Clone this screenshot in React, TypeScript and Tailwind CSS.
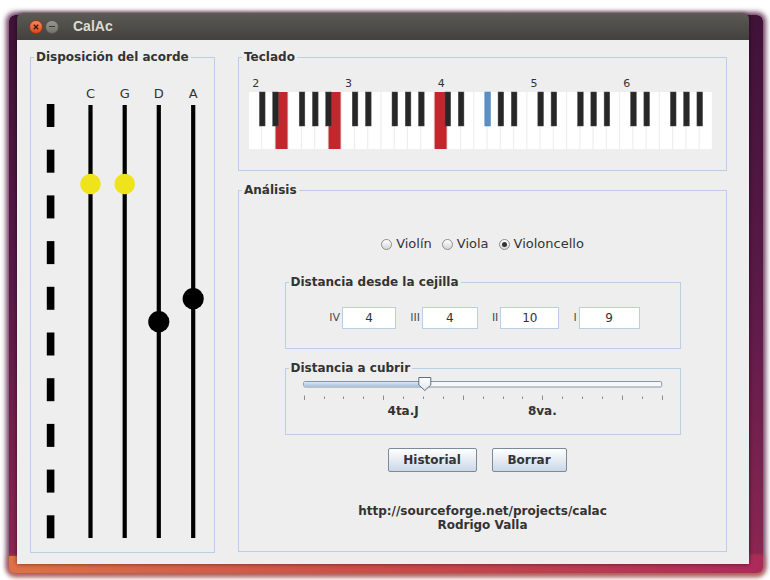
const KEY_W = 464 / 35;
const BLACK_STEPS = [1, 2, 4, 5, 6];
const RED_WHITES = [2, 6, 14];
const BLUE_BLACKS = [18];

const STRING_X = [59.5, 93.7, 127.8, 162.2];
const STRING_NAMES = ["C", "G", "D", "A"];

const FRETS = [
  { label: "IV", value: "4", width: "w-[54px]" },
  { label: "III", value: "4", width: "w-[56px]" },
  { label: "II", value: "10", width: "w-[59px]" },
  { label: "I", value: "9", width: "w-[61px]" },
];

function Keyboard() {
  const blacks: number[] = [];
  for (let o = 0; o < 5; o++) for (const s of BLACK_STEPS) blacks.push(o * 7 + s);
  return (
    <svg width="486" height="90" className="block">
      {[2, 3, 4, 5, 6].map((n, o) => (
        <text key={n} x={10 + o * 7 * KEY_W + KEY_W / 2} y="22.7" textAnchor="middle" fontSize="11" fill="#333">
          {n}
        </text>
      ))}
      {Array.from({ length: 35 }, (_, i) => (
        <rect
          key={i}
          x={10 + i * KEY_W}
          y="28"
          width={KEY_W - 1.2}
          height="57"
          fill={RED_WHITES.includes(i) ? "#c1272c" : "#ffffff"}
        />
      ))}
      {blacks.map((b) => (
        <rect
          key={b}
          x={10 + b * KEY_W - 2.8}
          y="28"
          width="5.6"
          height="34"
          fill={BLUE_BLACKS.includes(b) ? "#5b8fc4" : "#272727"}
          stroke={BLUE_BLACKS.includes(b) ? "#4d7db0" : "#4a4a4a"}
          strokeWidth="0.5"
        />
      ))}
    </svg>
  );
}

function Fingerboard() {
  return (
    <svg width="182" height="480" className="block">
      {Array.from({ length: 10 }, (_, i) => (
        <rect key={i} x="15.8" y={40 + i * 45.7} width="7.6" height="23" fill="#000" />
      ))}
      {STRING_X.map((x, i) => (
        <g key={i}>
          <text x={x} y="34.3" textAnchor="middle" fontSize="13" fill="#333">
            {STRING_NAMES[i]}
          </text>
          <rect x={x - 2.1} y="41" width="4.2" height="433" fill="#000" />
        </g>
      ))}
      <circle cx={STRING_X[0]} cy="120" r="10.3" fill="#efe31c" />
      <circle cx={STRING_X[1]} cy="120" r="10.3" fill="#efe31c" />
      <circle cx={STRING_X[2]} cy="257.7" r="10.6" fill="#000" />
      <circle cx={STRING_X[3]} cy="234.7" r="10.6" fill="#000" />
    </svg>
  );
}

function Slider() {
  const start = 17.7;
  const step = 358 / 18;
  const thumb = 138.8;
  return (
    <svg width="394" height="50" className="block">
      <defs>
        <linearGradient id="fill" x1="0" y1="0" x2="0" y2="1">
          <stop offset="0" stopColor="#dce7f3" />
          <stop offset="1" stopColor="#a9c1dc" />
        </linearGradient>
        <linearGradient id="thumb" x1="0" y1="0" x2="0" y2="1">
          <stop offset="0" stopColor="#ffffff" />
          <stop offset="1" stopColor="#dfe6ee" />
        </linearGradient>
      </defs>
      <rect x={start} y="6.5" width="358" height="5.5" rx="1.5" fill="#f6f7f9" stroke="#8496a8" strokeWidth="1" />
      <rect x={start + 0.5} y="7" width={thumb - start} height="4.5" fill="url(#fill)" />
      {Array.from({ length: 19 }, (_, i) => {
        const x = Math.round(start + i * step) + 0.5;
        const major = i % 4 === 0 || i === 18;
        return <line key={i} x1={x} x2={x} y1={major ? 20.5 : 21.5} y2={major ? 25 : 24} stroke="#8c8c8c" strokeWidth="1" />;
      })}
      <path
        d={`M${thumb - 6} 2.5 H${thumb + 6} V10 L${thumb} 15.5 L${thumb - 6} 10 Z`}
        fill="url(#thumb)"
        stroke="#5f6f80"
        strokeWidth="1"
        strokeLinejoin="round"
      />
      <text x={start + 5 * step} y="39.5" textAnchor="middle" fontSize="12" fontWeight="bold" fill="#333">
        4ta.J
      </text>
      <text x={start + 12 * step} y="39.5" textAnchor="middle" fontSize="12" fontWeight="bold" fill="#333">
        8va.
      </text>
    </svg>
  );
}

function Radio({ label, checked }: { label: string; checked?: boolean }) {
  return (
    <div className="flex items-center gap-[4px]">
      <span className="flex h-[11px] w-[11px] items-center justify-center rounded-full border border-[#8f8f8f] bg-gradient-to-b from-white to-[#d5d5d5]">
        {checked && <span className="h-[5px] w-[5px] rounded-full bg-[#333]" />}
      </span>
      <span className="text-[13px] leading-[16px]">{label}</span>
    </div>
  );
}

function Legend({ children }: { children: React.ReactNode }) {
  return <legend className="ml-[3px] px-[2px] text-[12px] font-bold leading-[14px] text-[#333]">{children}</legend>;
}

export default function App() {
  return (
    <div className="relative h-[580px] w-[770px] overflow-hidden bg-white font-['DejaVu_Sans',sans-serif] text-[#333]">
      {/* wallpaper seen around the window */}
      <div className="absolute left-[9px] top-[15px] h-[558px] w-[754px] rounded-[6px] bg-gradient-to-b from-[#3f1237] via-[#5a1a48] to-[#8e2652] shadow-[0_0_5px_3px_rgba(80,24,64,0.8)]" />
      <div className="absolute left-[9px] top-[556px] h-[17px] w-[754px] rounded-b-[6px] bg-gradient-to-r from-[#dd7246] via-[#c94c47] to-[#ac2a5a] shadow-[0_2px_4px_2px_rgba(210,100,70,0.6)]" />

      <div className="relative ml-[17px] mt-[13px] w-[732px] rounded-t-[6px] shadow-[0_0_4px_rgba(0,0,0,0.55)]">
        <div className="flex h-[27px] items-center rounded-t-[6px] bg-gradient-to-b from-[#5b5a55] to-[#42413d] pl-[12px]">
          <span className="flex h-[14px] w-[14px] items-center justify-center rounded-full border border-[#9b3612] bg-gradient-to-b from-[#f6885c] to-[#dc4818]">
            <svg width="6" height="6" viewBox="0 0 6 6">
              <path d="M0.8 0.8 L5.2 5.2 M5.2 0.8 L0.8 5.2" stroke="#3b1a0e" strokeWidth="1.3" />
            </svg>
          </span>
          <span className="ml-[2px] flex h-[14px] w-[14px] items-center justify-center rounded-full border border-[#55544f] bg-gradient-to-b from-[#98978f] to-[#73726c]">
            <span className="h-[1.5px] w-[6px] bg-[#3a3935]" />
          </span>
          <span className="ml-[14px] font-['Liberation_Sans',sans-serif] text-[14px] font-bold text-[#dfdbd2]">CalAc</span>
        </div>

        <div className="flex h-[524px] items-start bg-[#eeeeee]">
          <fieldset className="ml-[13px] mt-[10px] h-[503px] w-[185px] border border-[#b8cfe5]">
            <Legend>Disposición del acorde</Legend>
            <Fingerboard />
          </fieldset>

          <div className="ml-[23px] mt-[10px] flex w-[489px] flex-col">
            <fieldset className="h-[121px] w-[489px] border border-[#b8cfe5]">
              <Legend>Teclado</Legend>
              <Keyboard />
            </fieldset>

            <fieldset className="mt-[12px] h-[369px] w-[489px] border border-[#b8cfe5]">
              <Legend>Análisis</Legend>
              <div className="flex flex-col items-center">
                <div className="mt-[39px] flex h-[16px] items-center gap-[10px]">
                  <Radio label="Violín" />
                  <Radio label="Viola" />
                  <Radio label="Violoncello" checked />
                </div>

                <fieldset className="mt-[23px] h-[74px] w-[396px] border border-[#b8cfe5]">
                  <Legend>Distancia desde la cejilla</Legend>
                  <div className="ml-[4px] mt-[18px] flex justify-center gap-[14px]">
                    {FRETS.map((f) => (
                      <div key={f.label} className="flex items-center">
                        <span className="mr-[2px] text-[11px] text-[#4a4a4a]">{f.label}</span>
                        <div className={`${f.width} flex h-[22px] items-center justify-center border border-[#b8cfe5] bg-white text-[12px]`}>
                          {f.value}
                        </div>
                      </div>
                    ))}
                  </div>
                </fieldset>

                <fieldset className="mt-[12px] h-[74px] w-[396px] border border-[#b8cfe5]">
                  <Legend>Distancia a cubrir</Legend>
                  <Slider />
                </fieldset>

                <div className="mr-[11px] mt-[13px] flex gap-[15px]">
                  <button className="h-[24px] w-[89px] rounded-[2px] border border-[#7a8a99] bg-gradient-to-b from-white to-[#cbd8e6] text-[12px] font-bold text-[#333]">
                    Historial
                  </button>
                  <button className="h-[24px] w-[75px] rounded-[2px] border border-[#7a8a99] bg-gradient-to-b from-white to-[#cbd8e6] text-[12px] font-bold text-[#333]">
                    Borrar
                  </button>
                </div>

                <div className="mt-[32px] text-center text-[12px] font-bold leading-[14px]">
                  http://sourceforge.net/projects/calac
                  <br />
                  Rodrigo Valla
                </div>
              </div>
            </fieldset>
          </div>
        </div>
      </div>
    </div>
  );
}
